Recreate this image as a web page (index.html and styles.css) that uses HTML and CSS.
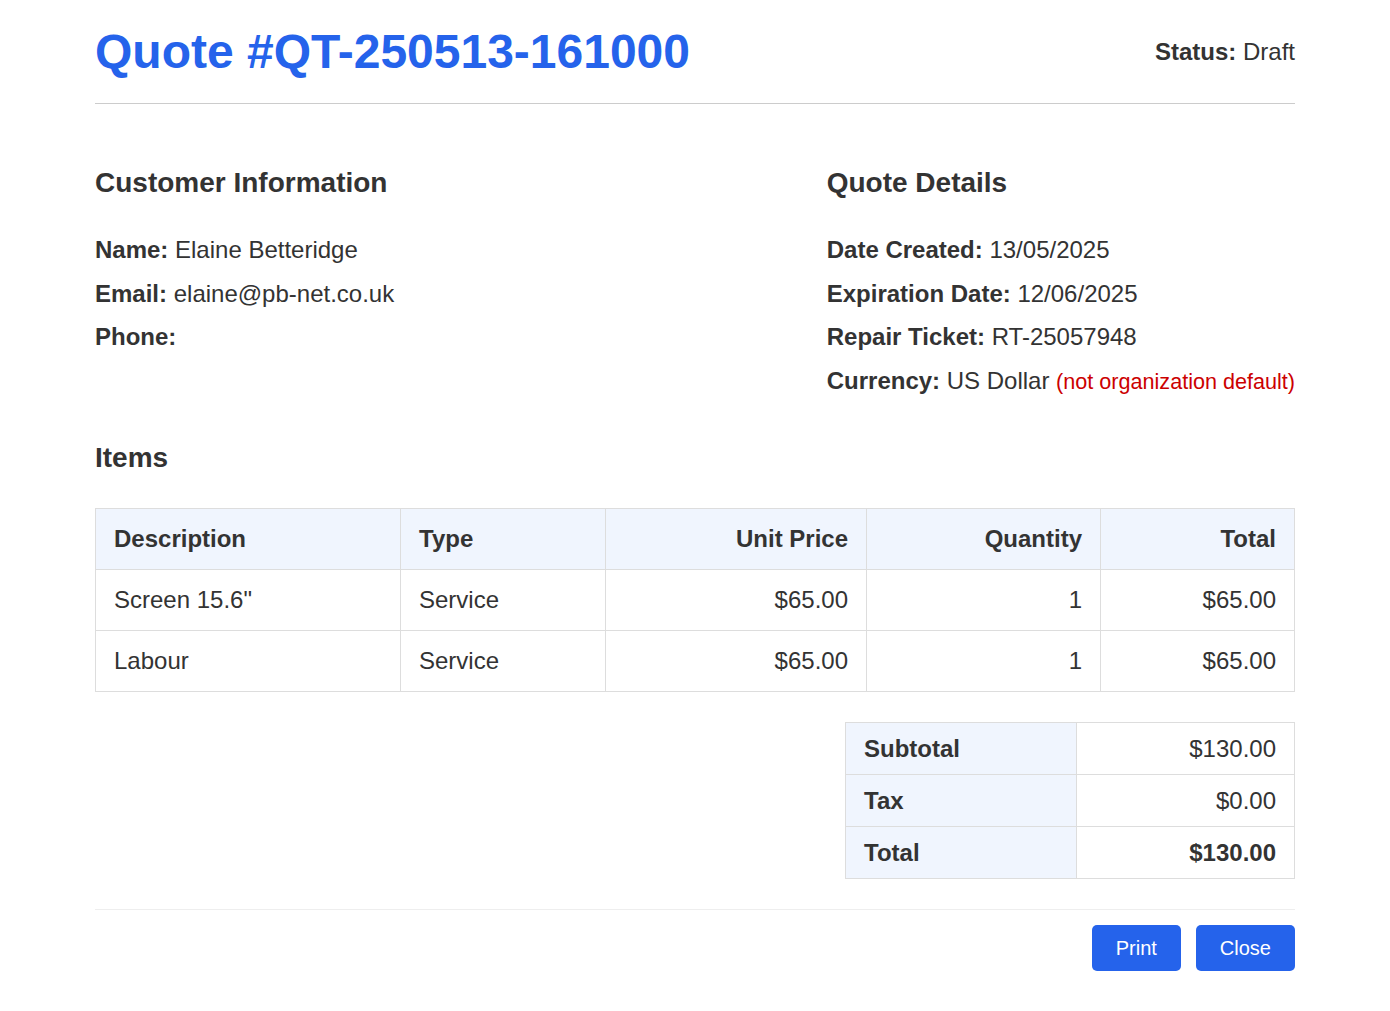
FILE: index.html
```html
<!DOCTYPE html>
<html lang="en">
<head>
<meta charset="utf-8">
<title>Quote QT-250513-161000</title>
<link rel="stylesheet" href="styles.css">
</head>
<body>
<div class="page">
  <header class="header">
    <h1 class="title">Quote #QT-250513-161000</h1>
    <div class="status"><strong>Status:</strong> Draft</div>
  </header>

  <section class="info">
    <div class="info-col">
      <h3 class="section-title">Customer Information</h3>
      <p class="field"><strong>Name:</strong> Elaine Betteridge</p>
      <p class="field"><strong>Email:</strong> elaine@pb-net.co.uk</p>
      <p class="field"><strong>Phone:</strong> </p>
    </div>
    <div class="info-col">
      <h3 class="section-title">Quote Details</h3>
      <p class="field"><strong>Date Created:</strong> 13/05/2025</p>
      <p class="field"><strong>Expiration Date:</strong> 12/06/2025</p>
      <p class="field"><strong>Repair Ticket:</strong> RT-25057948</p>
      <p class="field"><strong>Currency:</strong> US Dollar <span class="warn">(not organization default)</span></p>
    </div>
  </section>

  <h3 class="section-title items-title">Items</h3>
  <table class="items">
    <colgroup>
      <col class="c-desc"><col class="c-type"><col class="c-price"><col class="c-qty"><col class="c-total">
    </colgroup>
    <thead>
      <tr>
        <th>Description</th>
        <th>Type</th>
        <th class="num">Unit Price</th>
        <th class="num">Quantity</th>
        <th class="num">Total</th>
      </tr>
    </thead>
    <tbody>
      <tr>
        <td>Screen 15.6"</td>
        <td>Service</td>
        <td class="num">$65.00</td>
        <td class="num">1</td>
        <td class="num">$65.00</td>
      </tr>
      <tr>
        <td>Labour</td>
        <td>Service</td>
        <td class="num">$65.00</td>
        <td class="num">1</td>
        <td class="num">$65.00</td>
      </tr>
    </tbody>
  </table>

  <table class="totals">
    <colgroup><col class="t-label"><col class="t-value"></colgroup>
    <tbody>
      <tr><th>Subtotal</th><td class="num">$130.00</td></tr>
      <tr><th>Tax</th><td class="num">$0.00</td></tr>
      <tr><th>Total</th><td class="num grand">$130.00</td></tr>
    </tbody>
  </table>

  <footer class="actions">
    <button class="btn" type="button">Print</button>
    <button class="btn" type="button">Close</button>
  </footer>
</div>
</body>
</html>
```
FILE: styles.css
```css
* { box-sizing: border-box; }

html, body {
  margin: 0;
  padding: 0;
  background: #ffffff;
}

body {
  font-family: "Liberation Sans", Arial, sans-serif;
  font-size: 24px;
  color: #333333;
}

.page {
  width: 1200px;
  margin: 0 auto;
  padding-top: 24px;
}

.header {
  display: flex;
  justify-content: space-between;
  align-items: center;
  padding-bottom: 24px;
  border-bottom: 1px solid #cccccc;
}

.title {
  margin: 0;
  font-size: 48px;
  font-weight: bold;
  line-height: 55px;
  color: #2563eb;
}

.status {
  font-size: 24px;
}

.info {
  display: flex;
  justify-content: space-between;
  margin-top: 63px;
}

.section-title {
  margin: 0;
  font-size: 28px;
  line-height: 32px;
  font-weight: bold;
  color: #333333;
}

.info .section-title {
  margin-bottom: 37px;
}

.field {
  margin: 0 0 16px 0;
  line-height: 27.6px;
  white-space: nowrap;
}

.field:last-child {
  margin-bottom: 0;
}

.warn {
  color: #cc0000;
  font-size: 21.6px;
}

.items-title {
  margin-top: 47px;
  margin-bottom: 34px;
}

table {
  border-collapse: collapse;
  font-size: 24px;
  color: #333333;
}

.items {
  width: 1199px;
  table-layout: fixed;
}

.c-desc { width: 305px; }
.c-type { width: 205px; }
.c-price { width: 261px; }
.c-qty { width: 234px; }
.c-total { width: 194px; }

.items th,
.items td {
  border: 1px solid #dddddd;
  padding: 16px 18px;
  line-height: 28px;
  text-align: left;
}

.items th {
  background: #f0f5fe;
  font-weight: bold;
}

.items .num,
.totals .num {
  text-align: right;
}

.totals {
  width: 449px;
  margin: 30px 0 0 auto;
  table-layout: fixed;
}

.t-label { width: 231px; }
.t-value { width: 218px; }

.totals th,
.totals td {
  border: 1px solid #dddddd;
  padding: 12px 18px;
  line-height: 27px;
}

.totals th {
  background: #f0f5fe;
  text-align: left;
  font-weight: bold;
}

.totals .grand {
  font-weight: bold;
}

.actions {
  display: flex;
  justify-content: flex-end;
  gap: 15px;
  margin-top: 30px;
  padding-top: 15px;
  border-top: 1px solid #eeeeee;
}

.btn {
  height: 46px;
  padding: 0 24px;
  border: none;
  border-radius: 5px;
  background: #2563eb;
  color: #ffffff;
  font-family: "Liberation Sans", Arial, sans-serif;
  font-size: 20px;
  cursor: pointer;
}
```
